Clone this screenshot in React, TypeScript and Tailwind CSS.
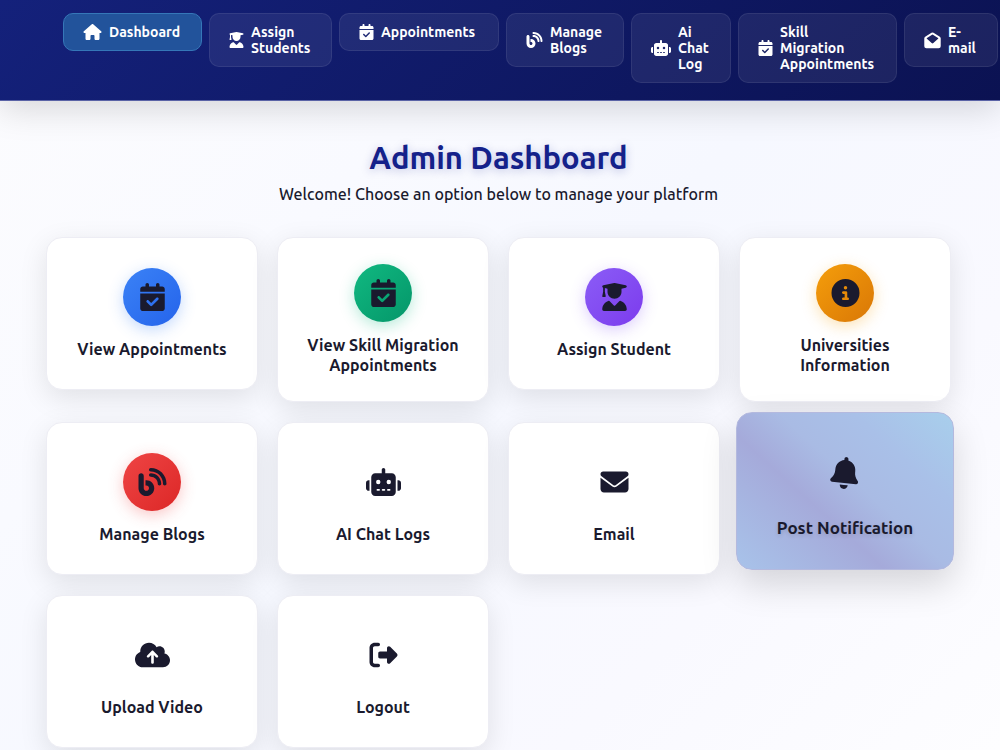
import type { ComponentType } from 'react';
import {
  FaBell,
  FaBlog,
  FaCalendarCheck,
  FaCircleInfo,
  FaCloudArrowUp,
  FaEnvelope,
  FaHouse,
  FaRightFromBracket,
  FaRobot,
  FaUserGraduate,
} from 'react-icons/fa6';

type Icon = ComponentType<{ className?: string }>;

function OpenEnvelope({ className }: { className?: string }) {
  return (
    <svg viewBox="0 0 24 24" fill="currentColor" fillRule="evenodd" aria-hidden="true" className={className}>
      <path d="M10.6 1.1a2.8 2.8 0 0 1 2.8 0l8.4 5.1A3 3 0 0 1 23.6 8.7V20a3 3 0 0 1-3 3H3.4a3 3 0 0 1-3-3V8.7a3 3 0 0 1 1.8-2.5zM12.6 3.8a1.2 1.2 0 0 0-1.2 0L4.2 8.4a.8.8 0 0 0-.1 1.3l6.7 6a1.9 1.9 0 0 0 2.4 0l6.7-6a.8.8 0 0 0-.1-1.3z" />
    </svg>
  );
}

type NavItem = { label: string; icon: Icon; width: string; iconSize: string; active?: boolean };

const navItems: NavItem[] = [
  { label: 'Dashboard', icon: FaHouse, width: 'w-[139px]', iconSize: 'h-4 w-[19px]', active: true },
  { label: 'Assign Students', icon: FaUserGraduate, width: 'w-[123px]', iconSize: 'h-4 w-[15px]' },
  { label: 'Appointments', icon: FaCalendarCheck, width: 'w-[160px]', iconSize: 'h-4 w-[15px]' },
  { label: 'Manage Blogs', icon: FaBlog, width: 'w-[118px]', iconSize: 'h-4 w-[17px]' },
  { label: 'Ai Chat Log', icon: FaRobot, width: 'w-[100px]', iconSize: 'h-4 w-5' },
  { label: 'Skill Migration Appointments', icon: FaCalendarCheck, width: 'w-[159px]', iconSize: 'h-4 w-[15px]' },
  { label: 'E-mail', icon: OpenEnvelope, width: 'w-[94px]', iconSize: 'h-[17px] w-[17px]' },
];

type Card = { label: string; icon: Icon; circle?: string; highlighted?: boolean };

const cards: Card[] = [
  {
    label: 'View Appointments',
    icon: FaCalendarCheck,
    circle: 'bg-linear-135 from-[#3b82f6] to-[#2563eb] shadow-[0_4px_15px_rgba(59,130,246,0.3)]',
  },
  {
    label: 'View Skill Migration Appointments',
    icon: FaCalendarCheck,
    circle: 'bg-linear-135 from-[#10b981] to-[#059669] shadow-[0_4px_15px_rgba(16,185,129,0.3)]',
  },
  {
    label: 'Assign Student',
    icon: FaUserGraduate,
    circle: 'bg-linear-135 from-[#8b5cf6] to-[#7c3aed] shadow-[0_4px_15px_rgba(139,92,246,0.3)]',
  },
  {
    label: 'Universities Information',
    icon: FaCircleInfo,
    circle: 'bg-linear-135 from-[#f59e0b] to-[#d97706] shadow-[0_4px_15px_rgba(245,158,11,0.3)]',
  },
  {
    label: 'Manage Blogs',
    icon: FaBlog,
    circle: 'bg-linear-135 from-[#ef4444] to-[#dc2626] shadow-[0_4px_15px_rgba(239,68,68,0.3)]',
  },
  { label: 'AI Chat Logs', icon: FaRobot },
  { label: 'Email', icon: FaEnvelope },
  { label: 'Post Notification', icon: FaBell, highlighted: true },
  { label: 'Upload Video', icon: FaCloudArrowUp },
  { label: 'Logout', icon: FaRightFromBracket },
];

function NavLink({ label, icon: Icon, width, iconSize, active }: NavItem) {
  return (
    <li className={`shrink-0 ${width}`}>
      <a
        href="#"
        aria-current={active ? 'page' : undefined}
        className={`flex items-center gap-[7px] rounded-[10px] border py-[10px] pl-[19px] text-sm leading-4 font-bold text-white ${
          active ? 'border-[#3577b8] bg-[#22539b]' : 'border-white/8 bg-white/7'
        }`}
      >
        <Icon className={`shrink-0 ${iconSize}`} />
        <span className="w-min">{label}</span>
      </a>
    </li>
  );
}

function DashboardCard({ label, icon: Icon, circle, highlighted }: Card) {
  return (
    <a
      href="#"
      className={`flex flex-col items-center justify-center rounded-2xl border text-center text-[#1a1a2e] ${
        highlighted
          ? '-mx-[3px] -mt-[10px] min-h-[158px] gap-4 border-[#b4b9de] bg-[linear-gradient(42deg,#a8c3ea_0%,#a5aada_38%,#a9bbe4_55%,#a9c0e8_74%,#a8cfec_100%)] px-4 shadow-[0_15px_35px_rgba(0,0,0,0.15)]'
          : 'min-h-[153px] gap-[13px] border-[#ededf4] bg-white px-5 py-[26px] shadow-[0_8px_28px_rgba(0,0,0,0.1)]'
      }`}
    >
      <span className={`flex size-[58px] items-center justify-center rounded-full ${circle ?? ''}`}>
        <Icon className={highlighted ? 'h-8 w-[30px] rotate-6' : 'h-7 w-[35px]'} />
      </span>
      <span
        className={`leading-5 font-bold ${
          highlighted ? 'text-[17px] [text-shadow:0_2px_4px_rgba(0,0,0,0.12)]' : 'text-base'
        }`}
      >
        {label}
      </span>
    </a>
  );
}

export default function App() {
  return (
    <div className="min-h-screen overflow-hidden bg-[linear-gradient(135deg,#fcfcfe_0%,#f9faff_30%,#f6f8ff_50%,#f9f9ff_75%,#fdfdff_100%)] pb-px font-['Ubuntu','Noto_Sans',sans-serif]">
      <header className="border-b border-[#5a63a6] bg-linear-135 from-[#14217b] to-[#0b1252] shadow-[0_8px_32px_rgba(0,0,0,0.15)]">
        <nav aria-label="Main" className="h-[100px] pt-[13px] pl-[63px]">
          <ul className="flex items-start gap-[7px]">
            {navItems.map((item) => (
              <NavLink key={item.label} {...item} />
            ))}
          </ul>
        </nav>
      </header>

      <main className="pt-[37px] pr-[49px] pl-[46px]">
        <div className="text-center">
          <h1 className="text-[31px] leading-10 font-bold text-[#14218a] [text-shadow:0_2px_10px_rgba(20,33,138,0.25)]">
            Admin Dashboard
          </h1>
          <p className="mt-[6px] text-base leading-5 font-medium text-[#1a1a2e]">
            Welcome! Choose an option below to manage your platform
          </p>
        </div>
        <div className="mt-[33px] grid grid-cols-4 items-start gap-x-[19px] gap-y-5">
          {cards.map((card) => (
            <DashboardCard key={card.label} {...card} />
          ))}
        </div>
      </main>
    </div>
  );
}
